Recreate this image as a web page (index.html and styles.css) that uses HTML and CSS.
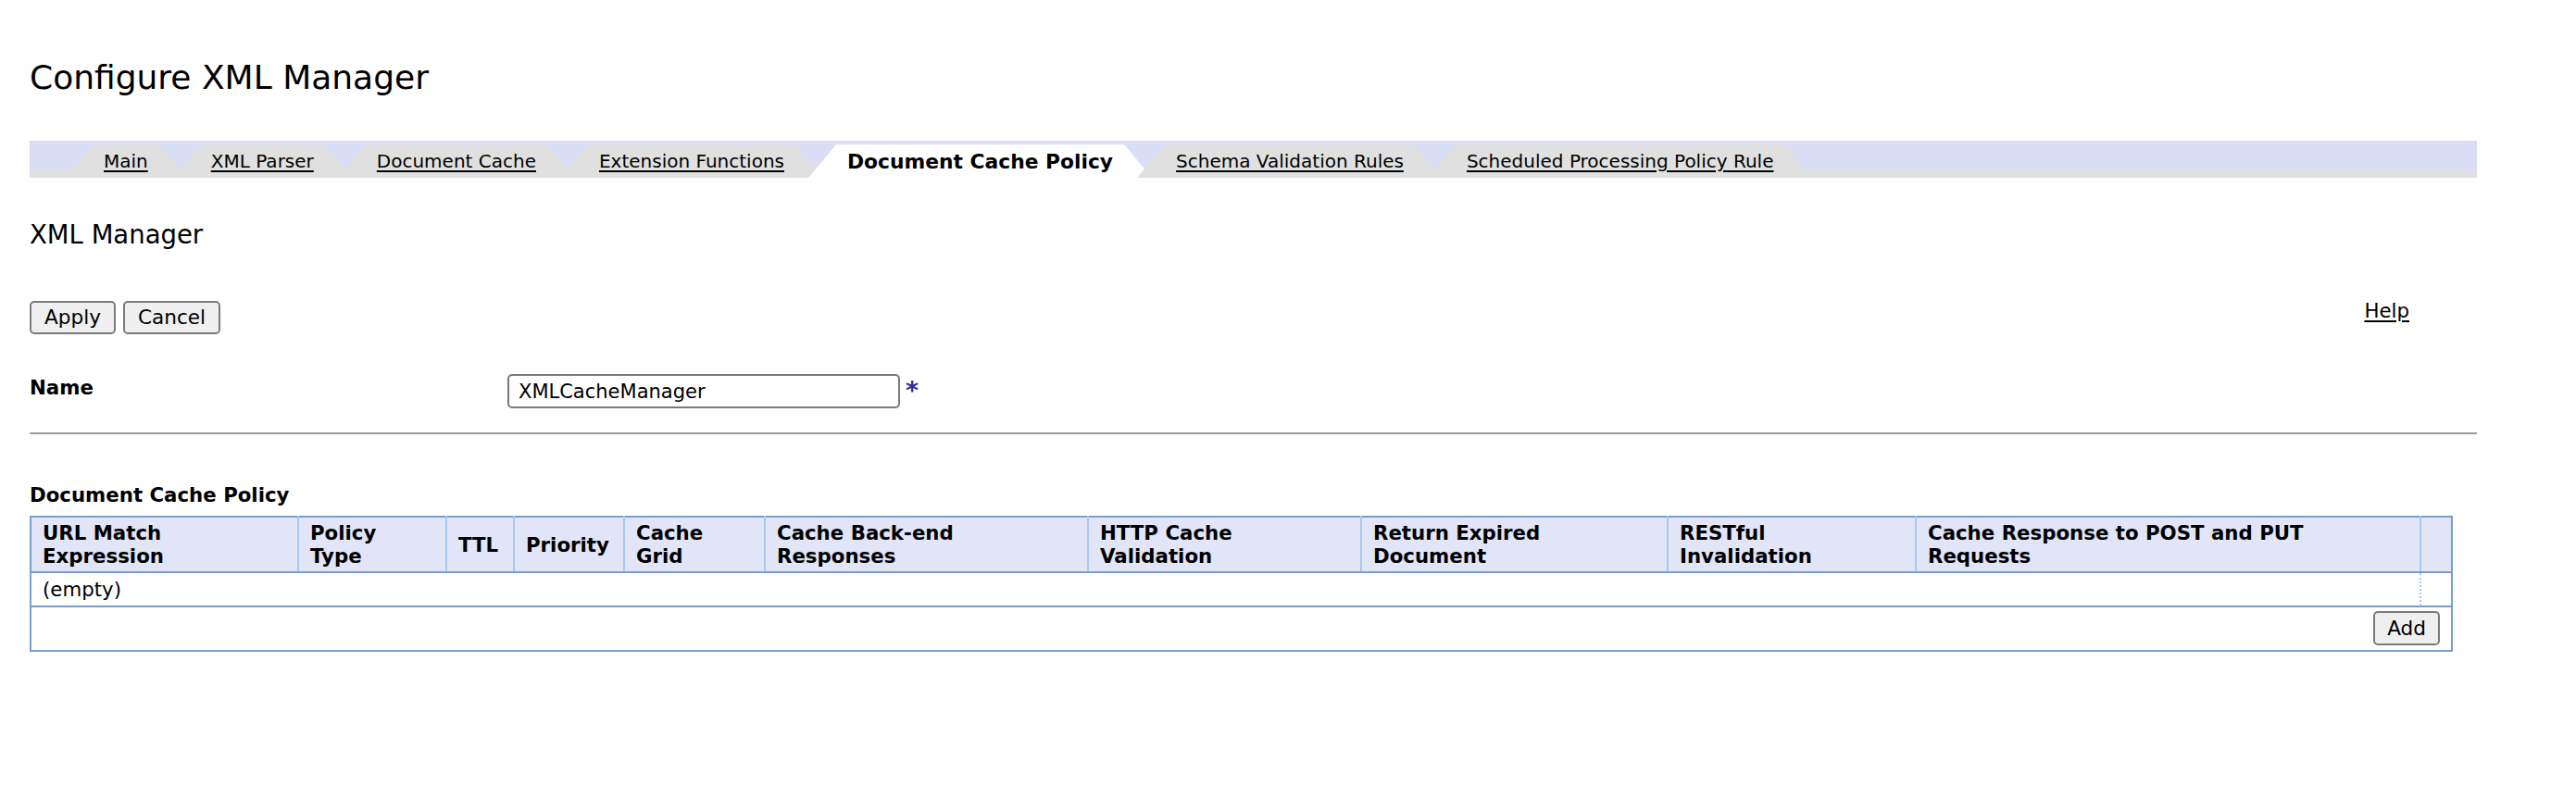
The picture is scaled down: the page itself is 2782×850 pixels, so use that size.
FILE: index.html
```html
<!DOCTYPE html>
<html>
<head>
<meta charset="utf-8">
<title>Configure XML Manager</title>
<link rel="stylesheet" href="styles.css">
</head>
<body>
<div class="page">
  <h1 class="title">Configure XML Manager</h1>

  <div class="tabbar">
    <a class="tab" href="#">Main</a>
    <a class="tab" href="#">XML Parser</a>
    <a class="tab" href="#">Document Cache</a>
    <a class="tab" href="#">Extension Functions</a>
    <span class="tab active">Document Cache Policy</span>
    <a class="tab" href="#">Schema Validation Rules</a>
    <a class="tab" href="#">Scheduled Processing Policy Rule</a>
  </div>

  <h2 class="subtitle">XML Manager</h2>

  <div class="actions">
    <div class="btns">
      <button class="btn">Apply</button>
      <button class="btn">Cancel</button>
    </div>
    <a class="help" href="#">Help</a>
  </div>

  <div class="field">
    <label class="label">Name</label>
    <input class="input" type="text" value="XMLCacheManager">
    <span class="req">*</span>
  </div>

  <div class="rule"></div>

  <div class="section-title">Document Cache Policy</div>

  <table class="grid">
    <colgroup>
      <col class="c1"><col class="c2"><col class="c3"><col class="c4"><col class="c5"><col class="c6"><col class="c7"><col class="c8"><col class="c9"><col class="c10"><col class="c11">
    </colgroup>
    <thead>
      <tr>
        <th>URL Match<br>Expression</th>
        <th>Policy<br>Type</th>
        <th>TTL</th>
        <th>Priority</th>
        <th>Cache<br>Grid</th>
        <th>Cache Back-end<br>Responses</th>
        <th>HTTP Cache<br>Validation</th>
        <th>Return Expired<br>Document</th>
        <th>RESTful<br>Invalidation</th>
        <th>Cache Response to POST and PUT<br>Requests</th>
        <th></th>
      </tr>
    </thead>
    <tbody>
      <tr class="empty-row">
        <td colspan="10">(empty)</td>
        <td class="spacer"></td>
      </tr>
      <tr class="add-row">
        <td colspan="11"><button class="btn add">Add</button></td>
      </tr>
    </tbody>
  </table>
</div>
</body>
</html>
```

FILE: styles.css
```css
html, body {
  margin: 0;
  padding: 0;
  background: #ffffff;
}

body {
  font-family: "DejaVu Sans", Verdana, sans-serif;
  color: #000;
  font-size: 21.3px;
}

.page {
  padding-left: 32px;
  width: 2643px;
}

.title {
  margin: 62px 0 0 0;
  font-size: 36px;
  font-weight: normal;
  line-height: 43px;
}

.tabbar {
  margin-top: 47px;
  height: 40px;
  display: flex;
  align-items: flex-end;
  padding-left: 38px;
  background: linear-gradient(to bottom, #d9ddf6 0, #d9ddf6 32px, #e0e0e0 32px, #e0e0e0 100%);
}

.tab {
  height: 36px;
  display: flex;
  align-items: center;
  padding: 0 42px;
  margin-left: -16px;
  background: #e0e0e0;
  color: #000;
  font-size: 20px;
  text-decoration: underline;
  text-underline-offset: 3px;
  white-space: nowrap;
  clip-path: polygon(30px 0, calc(100% - 30px) 0, 100% 100%, 0 100%);
}

.tab:first-child {
  margin-left: 0;
}

.tab.active {
  background: #ffffff;
  font-weight: bold;
  font-size: 21.8px;
  text-decoration: none;
}

.subtitle {
  margin: 45px 0 0 0;
  font-size: 27.5px;
  font-weight: normal;
  line-height: 33px;
}

.actions {
  margin-top: 55px;
  display: flex;
  justify-content: space-between;
  align-items: flex-start;
  padding-right: 73px;
}

.btns {
  display: flex;
  gap: 8px;
}

.btn {
  font-family: "DejaVu Sans", Verdana, sans-serif;
  font-size: 21.6px;
  color: #000;
  height: 36px;
  padding: 0 14px;
  border: 2px solid #7a7a7a;
  border-radius: 5px;
  background: #efefef;
  line-height: 32px;
}

.help {
  color: #000;
  font-size: 21.3px;
  line-height: 26px;
  margin-top: -2px;
  text-decoration: underline;
  text-underline-offset: 3px;
}

.field {
  margin-top: 43px;
  display: flex;
  align-items: flex-start;
}

.label {
  width: 516px;
  font-weight: bold;
  font-size: 21.3px;
  line-height: 26px;
  padding-top: 2px;
}

.input {
  box-sizing: border-box;
  width: 424px;
  height: 37px;
  margin: 0;
  padding: 0 10px;
  border: 2px solid #7a7a7a;
  border-radius: 5px;
  font-family: "DejaVu Sans", Verdana, sans-serif;
  font-size: 21px;
  color: #000;
  background: #fff;
}

.req {
  margin-left: 6px;
  padding-top: 5px;
  color: #2e3192;
  font-weight: bold;
  font-size: 27px;
  line-height: 26px;
}

.rule {
  margin-top: 26px;
  height: 2px;
  background: #999999;
}

.section-title {
  margin-top: 53px;
  font-weight: bold;
  font-size: 21.3px;
  line-height: 26px;
}

.grid {
  margin-top: 9px;
  width: 2615px;
  table-layout: fixed;
  border-collapse: collapse;
  border: 2px solid #7a9dd0;
  font-size: 21.3px;
}

.c1 { width: 289px; }
.c2 { width: 160px; }
.c3 { width: 73px; }
.c4 { width: 119px; }
.c5 { width: 152px; }
.c6 { width: 349px; }
.c7 { width: 295px; }
.c8 { width: 331px; }
.c9 { width: 268px; }
.c10 { width: 545px; }
.c11 { width: 34px; }

.grid th {
  background: #e1e5f7;
  text-align: left;
  vertical-align: middle;
  font-weight: bold;
  line-height: 25px;
  padding: 4px 12px;
  border-left: 2px solid #a9c8f1;
  border-bottom: 2px solid #7a9dd0;
  white-space: nowrap;
}

.grid th:first-child {
  border-left: 2px solid #7a9dd0;
}

.empty-row td {
  padding: 5px 12px 4px 12px;
  line-height: 26px;
  border-bottom: 2px solid #7a9dd0;
}

.empty-row td.spacer {
  padding: 0;
  border-left: 2px dotted #a9c8f1;
}

.add-row td {
  text-align: right;
  padding: 4px 12px 5px 12px;
}

.btn.add {
  height: 37px;
  padding: 0 13px;
}
```
